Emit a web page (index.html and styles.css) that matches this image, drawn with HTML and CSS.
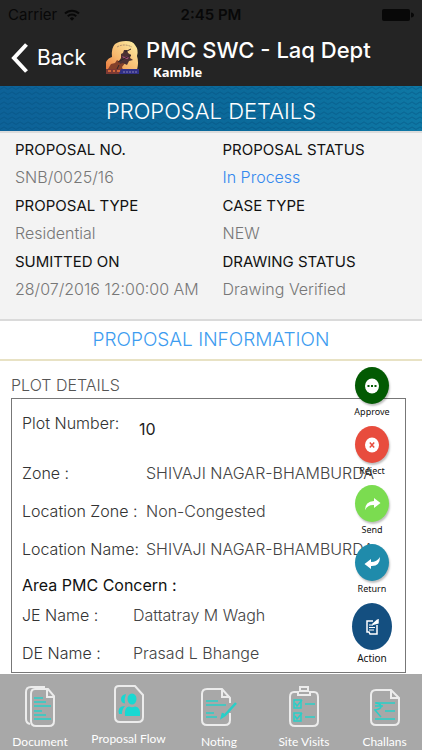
FILE: index.html
```html
<!DOCTYPE html>
<html lang="en">
<head>
	<meta charset="utf-8">
	<meta name="viewport" content="width=device-width, initial-scale=1">
	<title>Proposal Details</title>
	<link rel="stylesheet" href="styles.css">
</head>
<body>
<div class="app">
   <header class="topbar">
      <div class="status">
         <div class="carrier">
            <span>Carrier</span>
            <svg width="16" height="12" viewBox="0 0 16 12" fill="none" stroke="currentColor" stroke-width="2">
               <path d="M1 4.5a10 10 0 0 1 14 0M3.8 7.3a6 6 0 0 1 8.4 0"/>
               <path d="M8 11.8L5.8 9.4a3.2 3.2 0 0 1 4.4 0z" fill="currentColor" stroke="none"/>
            </svg>
         </div>
         <span class="time">2:45 PM</span>
         <svg class="battery" width="32" height="12" viewBox="0 0 32 12" fill="currentColor">
            <rect width="28" height="12" rx="2"/>
            <path d="M29 3.5q3 .5 3 2.5t-3 2.5z"/>
         </svg>
      </div>
      <div class="nav">
         <button class="back" type="button">
            <svg width="18" height="30" viewBox="0 0 18 30" fill="none" stroke="currentColor" stroke-width="4">
               <path d="M15.5 1.5L3 15l12.5 13.5"/>
            </svg>
            Back
         </button>
         <svg class="logo" width="35" height="34" viewBox="0 0 35 34">
            <defs>
               <linearGradient id="sun" x1="0" y1="1" x2="1" y2="0">
                  <stop offset="0" stop-color="#e8743a"/>
                  <stop offset=".4" stop-color="#f6b66c"/>
                  <stop offset="1" stop-color="#fdf2a8"/>
               </linearGradient>
            </defs>
            <path d="M1 30V21q2-4 6-5Q6 7 10 3q4-3 11-3t9 4q4 5 2 11 2 6 0 14z" fill="url(#sun)"/>
            <path d="M12 6q7-4 15 0" fill="none" stroke="#a98b6a" stroke-dasharray="2 1"/>
            <path d="M3 28l3-5 4-1 2-3 5 3 4-1-4 5 1 3H3z" fill="#84412a"/>
            <path d="M16 13l2-1 1-3 3 0 1 3 3 2-1 3 3 2-4 1-2 4-4-2-3 1-1-3 2-3z" fill="#4b3033"/>
            <path d="M17 15l3 1 4-1-1 3-4 0z" fill="#9c4a72"/>
            <path d="M20 11l6-3M13 21l13-7M14 24l-2 4" stroke="#2d2429"/>
            <path d="M1 28h15v5H1z" fill="#7c3933"/>
            <path d="M3 30h3m2 0h2m2 0h3" stroke="#d2683b" stroke-width="2"/>
            <path d="M16 28h18v5H14z" fill="#302f86"/>
            <path d="M18 31h14" stroke="#8c82b5" stroke-dasharray="2 1"/>
         </svg>
         <div class="heading">
            <h1>PMC SWC - Laq Dept</h1>
            <p>Kamble</p>
         </div>
      </div>
   </header>

   <h2 class="banner">PROPOSAL DETAILS</h2>

   <dl class="summary">
      <div><dt>PROPOSAL NO.</dt><dd>SNB/0025/16</dd></div>
      <div><dt>PROPOSAL STATUS</dt><dd class="progress">In Process</dd></div>
      <div><dt>PROPOSAL TYPE</dt><dd>Residential</dd></div>
      <div><dt>CASE TYPE</dt><dd>NEW</dd></div>
      <div><dt>SUMITTED ON</dt><dd>28/07/2016 12:00:00 AM</dd></div>
      <div><dt>DRAWING STATUS</dt><dd>Drawing Verified</dd></div>
   </dl>

   <h2 class="info-title">PROPOSAL INFORMATION</h2>

   <main class="plot">
      <h3>PLOT DETAILS</h3>
      <div class="plot-box">
         <dl>
            <div class="number"><dt>Plot Number:</dt><dd>10</dd></div>
            <div><dt>Zone :</dt><dd>SHIVAJI NAGAR-BHAMBURDA</dd></div>
            <div><dt>Location Zone :</dt><dd>Non-Congested</dd></div>
            <div><dt>Location Name:</dt><dd>SHIVAJI NAGAR-BHAMBURDA</dd></div>
         </dl>
         <h4>Area PMC Concern :</h4>
         <dl class="staff">
            <div><dt>JE Name :</dt><dd>Dattatray M Wagh</dd></div>
            <div><dt>DE Name :</dt><dd>Prasad L Bhange</dd></div>
         </dl>
      </div>

      <div class="actions">
         <button type="button">
            <span class="dot approve">
               <svg width="14" height="16" viewBox="0 0 14 16">
                  <ellipse cx="7" cy="8" rx="7" ry="7.5" fill="#fff"/>
                  <path d="M2.5 7h2v2h-2zM6 7h2v2H6zM9.5 7h2v2h-2z" fill="#035a03"/>
               </svg>
            </span>
            Approve
         </button>
         <button type="button">
            <span class="dot reject">
               <svg width="14" height="16" viewBox="0 0 14 16">
                  <ellipse cx="7" cy="8" rx="7" ry="7.5" fill="#fff"/>
                  <path d="M4.8 5.5l4.4 5M9.2 5.5l-4.4 5" stroke="#e84c3d" stroke-width="1.5"/>
               </svg>
            </span>
            Reject
         </button>
         <button type="button">
            <span class="dot send">
               <svg width="17" height="14" viewBox="0 0 17 14" fill="#fff">
                  <path d="M10 1l6.5 5L10 11V8Q4 7.500 1 13 1 4.500 10 4z"/>
               </svg>
            </span>
            Send
         </button>
         <button type="button">
            <span class="dot return">
               <svg width="17" height="14" viewBox="0 0 17 14" fill="#fff">
                  <path d="M7 3L.5 8 7 13v-3q9 .5 9-9-3 5-9 5z"/>
               </svg>
            </span>
            Return
         </button>
         <button type="button" class="main-action">
            <span class="dot action">
               <svg width="13" height="16" viewBox="0 0 13 16" fill="none" stroke="#fff" stroke-width="1.5">
                  <path d="M7 2H1v11h2l1 2h7V6"/>
                  <path d="M3 6h4M3 8.5h6M3 11h5" stroke-width="1"/>
                  <path d="M6.5 5.5L11.5 1M8 5l4-1V1z" fill="#fff"/>
               </svg>
            </span>
            Action
         </button>
      </div>
   </main>

   <nav class="tabs">
      <a href="#document">
         <svg width="32" height="42" viewBox="0 0 32 42" fill="none" stroke="#ececec" stroke-width="2">
            <path d="M6 39q-4-1-4-5V7q0-5 5-5h14"/>
            <path d="M11 4h13l6 7v25q0 5-5 5H12q-5 0-5-5V9q0-5 4-5z"/>
            <path d="M23 4v8h7"/>
            <path d="M10 13h9M10 17h12M10 21h17M10 26h8M10 30h12M10 34h17" stroke="#28cfc8" stroke-width="1.5"/>
         </svg>
         Document
      </a>
      <a href="#flow" class="flow">
         <svg width="32" height="40" viewBox="0 0 32 40" fill="none" stroke="#ececec" stroke-width="2">
            <path d="M6 2h16l8 9v22q0 5-5 5H7q-5 0-5-5V6q0-4 4-4z"/>
            <g fill="#18d8d2" stroke="none">
               <ellipse cx="19" cy="15" rx="4.5" ry="5.5"/>
               <path d="M12 32q-1-9 4-9.500 3 1.500 6 0 6 .5 5 9.500z"/>
               <path d="M13 10q-5 1-5 5t4 4.500q-1-5 1-9.500zM6 30q-2-8 6-8-3 3-3 8z"/>
            </g>
         </svg>
         Proposal Flow
      </a>
      <a href="#noting">
         <svg width="40" height="40" viewBox="0 0 40 40" fill="none" stroke="#ececec" stroke-width="2">
            <path d="M31 26v7q0 5-5 5H8q-5 0-5-5V7q0-5 5-5h15l8 9v5"/>
            <path d="M23 2v8h8"/>
            <path d="M7 14h12M7 18h20M7 26h8M7 30h11" stroke="#28cfc8" stroke-width="1.5"/>
            <path d="M37 16L26 28l-3 2 1-4" stroke="#28cfc8" stroke-width="2.5"/>
         </svg>
         Noting
      </a>
      <a href="#visits">
         <svg width="32" height="42" viewBox="0 0 32 42" fill="none" stroke="#ececec" stroke-width="2">
            <path d="M10 7H6Q2 7 2 12v24q0 5 5 5h18q5 0 5-5V12q0-5-4-5h-4"/>
            <path d="M10 6v4h12V6M12 2h8v4h-8z"/>
            <g stroke="#28cfc8" stroke-width="1.5">
               <path d="M6 15h7v8H6zM6 28h7v8H6zM17 19h10M17 32h10"/>
               <path d="M7 18l2 3 5-6M7 31l2 3 5-6"/>
            </g>
         </svg>
         Site Visits
      </a>
      <a href="#challans">
         <svg width="32" height="38" viewBox="0 0 32 38" fill="none" stroke="#ececec" stroke-width="2">
            <path d="M7 1h15l8 8v22q0 5-5 5H7q-5 0-5-5V6q0-5 5-5z"/>
            <path d="M22 1v8h8"/>
            <path d="M6 14h20M16 22h10M6 30h20" stroke="#28cfc8" stroke-width="1.5"/>
            <path d="M6 17h8M7 14q5 1 5 3.5T6 21l6 7" stroke="#28cfc8" stroke-width="1.5"/>
         </svg>
         Challans
      </a>
   </nav>
</div>
</body>
</html>
```
FILE: styles.css
```css
* {
   box-sizing: border-box;
}

body {
   margin: 0;
   background: #fff;
   font-family: Inter, "Liberation Sans", sans-serif;
   font-size: 16px;
   font-weight: 300;
   line-height: 20px;
   color: #333;
}

h1, h2, h3, h4, p, dl, dd {
   margin: 0;
   font-weight: inherit;
}

button {
   border: none;
   padding: 0;
   background: none;
   font: inherit;
   color: inherit;
   cursor: pointer;
}

svg {
   display: block;
   flex-shrink: 0;
}

.app {
   display: flex;
   flex-direction: column;
   min-height: 100vh;
}

/* Header */
.topbar {
   background: #242424;
   color: #fff;
}

.status {
   display: grid;
   grid-template-columns: 1fr auto 1fr;
   align-items: center;
   height: 29px;
   padding: 0 8px;
   font-size: 15px;
   font-weight: 400;
   color: #080808;
}

.carrier {
   display: flex;
   align-items: center;
   gap: 7px;
}

.time {
   font-weight: 600;
}

.battery {
   justify-self: end;
}

.nav {
   display: flex;
   align-items: center;
   height: 57px;
   padding-left: 11px;
}

.back {
   display: flex;
   align-items: center;
   gap: 8px;
   font-size: 21px;
   font-weight: 400;
}

.logo {
   margin-left: 19px;
}

.heading {
   margin-left: 6px;
   white-space: nowrap;
}

.heading h1 {
   font-size: 22px;
   font-weight: 500;
   line-height: 28px;
}

.heading p {
   padding-left: 7px;
   font-family: "Open Sans", sans-serif;
   font-size: 13px;
   font-weight: 700;
   line-height: 16px;
}

.banner {
   padding-top: 5px;
   background-color: #0d6797;
   background-image:
      url("data:image/svg+xml,%3Csvg xmlns='http://www.w3.org/2000/svg' width='8' height='5'%3E%3Cpath d='M-1 4L0 3.5L4 1L8 3.5L9 4' fill='none' stroke='%23034a78' stroke-opacity='.35' stroke-width='1.2'/%3E%3C/svg%3E"),
      linear-gradient(90deg, #0d6298, #0b6b9b 60%, #0e78a5);
   color: #fff;
   font-size: 22px;
   font-weight: 300;
   line-height: 40px;
   text-align: center;
}

/* Proposal summary */
.summary {
   display: grid;
   grid-template-columns: 1fr 1fr;
   gap: 9px 8px;
   padding: 7px 0 20px 15px;
   border-top: 2px solid #dcdcdc;
   border-bottom: 2px solid #dadada;
   background: #f3f3f3;
   white-space: nowrap;
}

.summary dt {
   margin-bottom: 7px;
   font-size: 15px;
   font-weight: 400;
   color: #111;
}

.summary dd {
   color: #777;
}

.summary .progress {
   color: #3388ee;
}

.info-title {
   border-bottom: 2px solid #e8e2c4;
   color: #3d9cf0;
   font-size: 19px;
   line-height: 38px;
   text-align: center;
}

/* Plot details */
.plot {
   position: relative;
   flex: 1;
   padding: 14px 16px 1px 11px;
}

.plot h3 {
   margin-bottom: 3px;
   font-size: 16px;
   color: #555;
}

.plot-box {
   border: 1px solid #777;
   padding-left: 10px;
   white-space: nowrap;
}

.plot-box dl > div {
   display: flex;
   align-items: center;
   height: 38px;
}

.plot-box dt {
   width: 124px;
}

.plot-box dd {
   color: #444;
}

.plot-box .number {
   align-items: flex-start;
   height: 55px;
   padding-top: 14px;
}

.plot-box .number dt {
   width: 117px;
}

.plot-box .number dd {
   padding-top: 6px;
   color: #222;
   font-weight: 400;
}

.plot-box h4 {
   padding-top: 6px;
   font-size: 16px;
   line-height: 22px;
   font-weight: 400;
   color: #111;
}

.plot-box .staff dt {
   width: 111px;
}

/* Floating actions */
.actions {
   position: absolute;
   top: 6px;
   right: 25px;
   display: flex;
   flex-direction: column;
   align-items: center;
   gap: 8px;
   width: 50px;
   font-family: "Noto Sans", sans-serif;
   font-size: 9px;
   font-weight: 400;
   line-height: 12px;
   color: #111;
}

.actions button {
   display: flex;
   flex-direction: column;
   align-items: center;
   gap: 2px;
}

.dot {
   display: flex;
   align-items: center;
   justify-content: center;
   width: 34px;
   height: 37px;
   border-radius: 50%;
   box-shadow: 1px 2px 2px rgba(0, 0, 0, 0.25);
}

.approve {
   background: #035a03;
}

.reject {
   background: #e84c3d;
}

.send {
   background: #7bdc50;
}

.return {
   background: #1f8bab;
}

.action {
   width: 40px;
   height: 47px;
   background: #144f80;
   box-shadow: none;
}

.main-action {
   font-size: 10px;
}

/* Bottom tabs */
.tabs {
   display: grid;
   grid-template-columns: 80fr 97fr 84fr 86fr 75fr;
   padding: 10px 0 2px;
   background: #a8a8a8;
}

.tabs a {
   display: flex;
   flex-direction: column;
   align-items: center;
   justify-content: flex-end;
   gap: 8px;
   color: #fff;
   font-family: Lato, sans-serif;
   font-size: 12px;
   font-weight: 400;
   line-height: 14px;
   text-decoration: none;
   white-space: nowrap;
}

.tabs .flow {
   padding-bottom: 3px;
}
```
